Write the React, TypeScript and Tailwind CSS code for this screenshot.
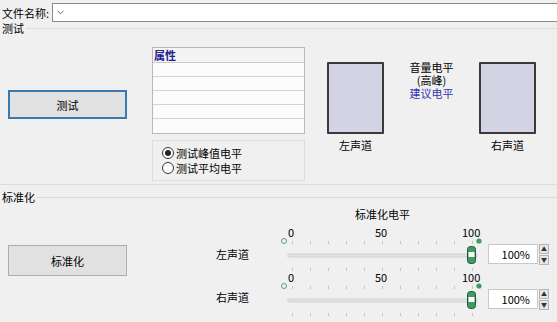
import React from 'react';

const FONT = { fontFamily: '"Noto Sans CJK SC", "Microsoft YaHei", sans-serif' };

function Legend({ label, className = '' }: { label: string; className?: string }) {
  return (
    <div className={`flex items-center h-[13px] ${className}`}>
      <span className="pl-[2px] pr-[2px] leading-[13px] whitespace-nowrap">{label}</span>
      <div className="flex-1 h-px bg-[#dcdcdc]" />
    </div>
  );
}

function Meter({ label }: { label: string }) {
  return (
    <div className="flex flex-col items-center w-[57px]">
      <div className="w-[57px] h-[72px] bg-[#d3d3e3] border-2 border-[#3a3a3a] rounded-[1px]" />
      <span className="mt-[4px] leading-[14px] whitespace-nowrap">{label}</span>
    </div>
  );
}

const TICKS = [0, 1, 2, 3, 4, 5, 6, 7, 8, 9, 10];

function Slider() {
  return (
    <div className="flex items-start h-[45px]">
      <div className="relative w-[205px] h-[45px]">
        <span className="absolute left-[8px] top-[1px] leading-[14px]">0</span>
        <span className="absolute left-[95px] top-[1px] leading-[14px]">50</span>
        <span className="absolute left-[182px] top-[1px] leading-[14px]">100</span>
        <svg className="absolute left-0 top-0" width="205" height="48">
          <circle cx="4" cy="17" r="2.5" fill="none" stroke="#5f9c80" strokeWidth="1" />
          <circle cx="199" cy="17" r="2.6" fill="#3f9b63" />
          {TICKS.map((k) => (
            <g key={k}>
              <line x1={12 + 18 * k + 0.5} x2={12 + 18 * k + 0.5} y1="17" y2="20" stroke="#c4c4c4" />
              <line x1={12 + 18 * k + 0.5} x2={12 + 18 * k + 0.5} y1="44" y2="47" stroke="#c4c4c4" />
            </g>
          ))}
          <rect x="8" y="30" width="189" height="3" fill="#e2e2e2" stroke="#d2d2d2" strokeWidth="1" />
          <rect x="187.5" y="22.5" width="8" height="17" rx="3" fill="#3f9b63" stroke="#1f5a36" />
          <rect x="188.5" y="28" width="6" height="5" fill="#ffffff" />
        </svg>
      </div>
      <div className="flex items-start mt-[20px] ml-[3px]">
        <div className="w-[50px] h-[20px] bg-white border border-[#c8c8c8] flex items-center justify-end pr-[7px] leading-[14px]">
          100%
        </div>
        <div className="flex flex-col ml-[1px] gap-[1px]">
          <div className="w-[10px] h-[10px] bg-[#e6e6e6] border border-[#b4b4b4] flex items-center justify-center text-[6px] leading-[6px] text-[#333]">▲</div>
          <div className="w-[10px] h-[10px] bg-[#e6e6e6] border border-[#b4b4b4] flex items-center justify-center text-[6px] leading-[6px] text-[#333]">▼</div>
        </div>
      </div>
    </div>
  );
}

export default function App() {
  return (
    <div className="w-[557px] h-[322px] bg-[#f0f0f0] text-[11px] text-black overflow-hidden" style={FONT}>
      <div className="flex items-center pt-[3px] h-[22px]">
        <span className="w-[52px] shrink-0 pl-[2px] leading-[14px] whitespace-nowrap">文件名称:</span>
        <div className="flex-1 h-[19px] bg-white border border-[#8a8a8a] border-r-0 flex items-center pl-[4px]">
          <svg width="7" height="5" viewBox="0 0 7 5">
            <path d="M0.5 0.8 L3.5 3.8 L6.5 0.8" fill="none" stroke="#606060" strokeWidth="1" />
          </svg>
        </div>
      </div>

      <Legend label="测试" />
      <div className="flex h-[150px] border-b border-[#dcdcdc]">
        <div className="pl-[8px] pt-[55px]">
          <button className="w-[119px] h-[29px] bg-[#e1e1e1] border-2 border-[#3a78ad] leading-[14px]">测试</button>
        </div>
        <div className="ml-[25px] pt-[12px]">
          <div className="w-[153px] h-[87px] bg-white border border-[#b9b9b9] flex flex-col">
            <div className="h-[15px] border-b border-[#c8c8c8] pl-[1px] font-bold text-[#20208c] leading-[14px] bg-[#f4f4f4]">属性</div>
            {[0, 1, 2, 3, 4].map((i) => (
              <div key={i} className={`h-[14.5px] ${i < 4 ? 'border-b border-[#d4d4d4]' : ''} bg-[#fcfcfc]`} />
            ))}
          </div>
          <div className="mt-[6px] w-[153px] h-[41px] border border-[#dcdcdc] flex flex-col justify-center pl-[9px] gap-[1px]">
            <label className="flex items-center gap-[2px] leading-[14px]">
              <span className="w-[12px] h-[12px] rounded-full border border-[#333] bg-white flex items-center justify-center">
                <span className="w-[6px] h-[6px] rounded-full bg-[#222]" />
              </span>
              测试峰值电平
            </label>
            <label className="flex items-center gap-[2px] leading-[14px]">
              <span className="w-[12px] h-[12px] rounded-full border border-[#333] bg-white" />
              测试平均电平
            </label>
          </div>
        </div>
        <div className="ml-[22px] pt-[27px]">
          <Meter label="左声道" />
        </div>
        <div className="w-[95px] pt-[26px] flex flex-col items-center leading-[13px]">
          <span>音量电平</span>
          <span>(高峰)</span>
          <span className="text-[#3434b0]">建议电平</span>
        </div>
        <div className="pt-[27px]">
          <Meter label="右声道" />
        </div>
      </div>

      <Legend label="标准化" className="mt-[6px]" />
      <div className="flex">
        <div className="pl-[8px] pt-[41px]">
          <button className="w-[119px] h-[31px] bg-[#e1e1e1] border border-[#adadad] leading-[14px]">标准化</button>
        </div>
        <div className="ml-[89px] w-[64px] pt-[43px] flex flex-col leading-[14px]">
          <span>左声道</span>
          <span className="mt-[29px]">右声道</span>
        </div>
        <div className="flex flex-col">
          <div className="w-[205px] h-[20px] flex items-center justify-center leading-[14px]">标准化电平</div>
          <Slider />
          <Slider />
        </div>
      </div>
    </div>
  );
}
